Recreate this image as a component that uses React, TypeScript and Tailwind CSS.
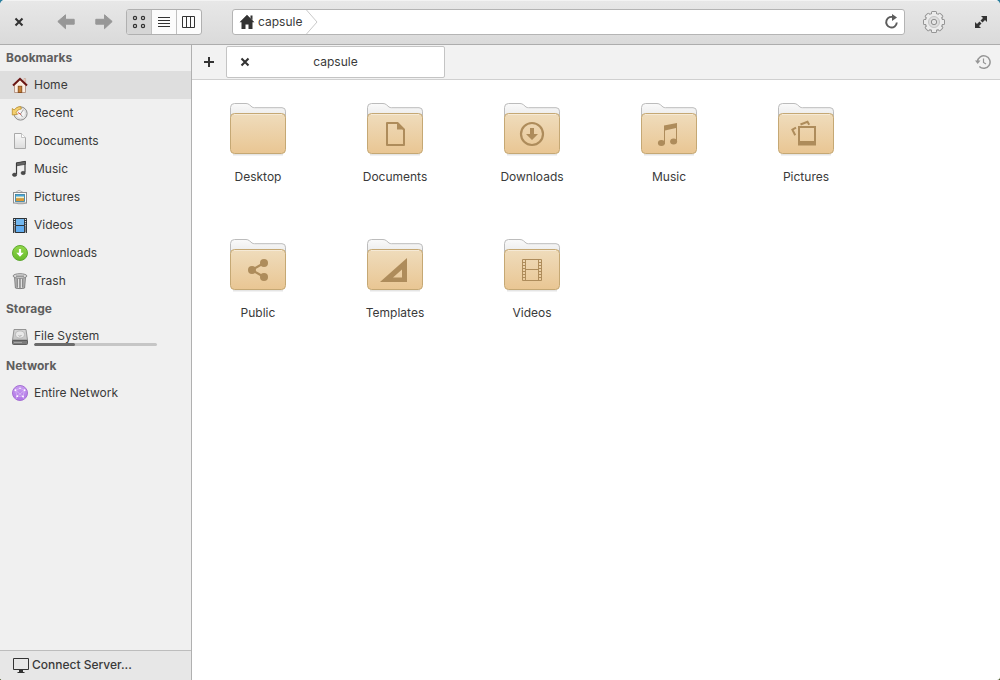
import React, { useState } from "react";

const INK = "#333333";
const GLYPH = "#ae8c5b";

function SidebarIcon({ children }: { children: React.ReactNode }) {
  return (
    <svg viewBox="0 0 16 16" className="size-4 shrink-0 overflow-visible" aria-hidden="true">
      {children}
    </svg>
  );
}

const icons: Record<string, React.ReactNode> = {
  home: (
    <>
      <path d="M12 1.5h1.6v5H12z" fill="#f6d9c8" stroke="#c2a090" strokeWidth=".6" />
      <path d="M2.5 8 8 2.8 13.5 8v7.5h-11z" fill="#fbeee2" stroke="#a98573" strokeWidth=".8" />
      <path d="M1 8.5 8 1.8l7 6.7" fill="none" stroke="#6b1715" strokeWidth="2" />
      <rect x="6.2" y="9.2" width="3.6" height="6.3" fill="#c67f35" stroke="#7d4514" strokeWidth=".8" />
    </>
  ),
  recent: (
    <>
      <circle cx="8.5" cy="8.5" r="6.6" fill="#e6e6e6" stroke="#8c8c8c" />
      <circle cx="8.5" cy="8.5" r="4.9" fill="#f4f4f4" stroke="#cccccc" strokeWidth=".6" />
      <path d="M8.500 9l2.800-4.200M8.500 9l2 3" stroke="#8a8a8a" strokeWidth=".8" fill="none" />
      <path d="M9 9.5 6 7.5" stroke="#d9534a" strokeWidth="1" />
      <path d="M.3 3.5V10l5.300-.7-1.500-1.600C5 5.500 6.800 4.300 9.300 4L8.800 1.600C5.800 1.600 3.800 2.800 2.200 5z" fill="#f4d070" stroke="#b98d2d" strokeWidth=".8" />
    </>
  ),
  document: (
    <>
      <path d="M2.5.5h7l4 4v11h-11z" fill="url(#paper)" stroke="#a9a9a9" />
      <path d="M9.5.5v4h4" fill="#ffffff" stroke="#bcbcbc" strokeWidth=".9" />
    </>
  ),
  music: (
    <>
      <path d="M4.5 13V2.2L13 .8V11" fill="none" stroke="#3c3c3c" strokeWidth="1.2" />
      <path d="M4.5 1.8 13.4.3v3L4.5 4.8z" fill="#666666" stroke="#333333" strokeWidth=".7" />
      <ellipse cx="2.6" cy="13.8" rx="2.2" ry="1.7" fill="#4b4b4b" stroke="#2f2f2f" strokeWidth=".5" />
      <ellipse cx="11.2" cy="12" rx="2.2" ry="1.7" fill="#4b4b4b" stroke="#2f2f2f" strokeWidth=".5" />
    </>
  ),
  pictures: (
    <>
      <path d="m1 5 6-3.8 8 4.3" fill="#eeeeee" stroke="#a6a6a6" strokeWidth=".8" />
      <path d="M1.5 13 6 14.8h5l3.6-1" fill="none" stroke="#aaaaaa" strokeWidth=".8" />
      <rect x="1.5" y="3.5" width="13" height="10.5" fill="#fbfbfb" stroke="#8f8f8f" />
      <rect x="3.5" y="5.5" width="9" height="7" fill="#45a5dc" stroke="#3b7f9b" strokeWidth=".8" />
      <path d="M4 7.500h8v2H4z" fill="#f6f0c9" />
      <path d="M4 9.200h8v2.900H4z" fill="#dd9a33" />
    </>
  ),
  videos: (
    <>
      <rect x="1" y="1" width="14" height="15" rx=".5" fill="#2d3338" />
      <rect x="4" y="2" width="8" height="6" fill="#72b7ef" />
      <rect x="4" y="9" width="8" height="6" fill="#62adf0" />
      <path d="M2.5 2v14M13.5 2v14" stroke="#e6e6e6" strokeWidth="1.2" strokeDasharray="1.1 1" />
    </>
  ),
  downloads: (
    <>
      <circle cx="8" cy="8" r="7.5" fill="url(#green)" stroke="#5fa832" />
      <path d="M6.9 4h2.2v3.8h2.6L8 11.8 4.3 7.8h2.6z" fill="#ffffff" />
    </>
  ),
  trash: (
    <>
      <path d="m2.5 3.5.9 11.5c1.2.8 8 .8 9.2 0l.9-11.5z" fill="#bdbdbd" stroke="#777777" strokeWidth=".9" />
      <path d="M5.2 5.5v9M8 5.5V15M10.8 5.5v9" stroke="#777777" strokeWidth="1" />
      <path d="M6.5 5.5V15M9.4 5.5V15" stroke="#e9e9e9" strokeWidth=".9" />
      <ellipse cx="8" cy="3" rx="6.9" ry="2.3" fill="#d9d9d9" stroke="#7d7d7d" strokeWidth=".9" />
      <path d="M4 3.2h8" stroke="#8e8e8e" strokeWidth="1.3" />
    </>
  ),
  drive: (
    <>
      <path d="M2 .5h12l1.5 10.5H.5z" fill="url(#metal)" stroke="#8b8b8b" strokeWidth=".9" />
      <ellipse cx="8" cy="5.5" rx="4.5" ry="3.6" fill="#e8e8e8" stroke="#b2b2b2" strokeWidth=".8" />
      <path d="M6.5 6.5c.5 1 2.4 1 3-.4" fill="none" stroke="#999999" strokeWidth=".8" />
      <path d="M.5 11.5h15v3q0 1-1 1h-13q-1 0-1-1z" fill="#7c7c7c" stroke="#555555" strokeWidth=".9" />
      <path d="M2 13.500h8" stroke="#a5a5a5" />
    </>
  ),
  network: (
    <>
      <circle cx="8" cy="8" r="7.5" fill="url(#purple)" stroke="#a56fd4" />
      <path d="M3.4 5.2 8 3.4l4.6 1.8M3.4 5.2l1.8 6 5.8.2 1.6-6.2M3.4 5.2l7.6 6.2M12.6 5.2l-7.4 6M8 3.4v-2M5.2 11.2 4 14M11 11.4l1 2.4" fill="none" stroke="#dfc4f7" strokeWidth=".6" />
      <g fill="#ffffff">
        <circle cx="3.4" cy="5.2" r=".9" />
        <circle cx="12.6" cy="5.2" r=".9" />
        <circle cx="8" cy="3.4" r=".7" />
        <circle cx="5.2" cy="11.2" r=".9" />
        <circle cx="11" cy="11.4" r=".9" />
      </g>
    </>
  ),
};

const bookmarks = [
  { name: "Home", icon: "home" },
  { name: "Recent", icon: "recent" },
  { name: "Documents", icon: "document" },
  { name: "Music", icon: "music" },
  { name: "Pictures", icon: "pictures" },
  { name: "Videos", icon: "videos" },
  { name: "Downloads", icon: "downloads" },
  { name: "Trash", icon: "trash" },
];

const folders: { name: string; glyph: React.ReactNode }[] = [
  { name: "Desktop", glyph: null },
  {
    name: "Documents",
    glyph: (
      <>
        <path d="M24 25h10.5l6.5 6.5V47H24z" fill="none" stroke={GLYPH} strokeWidth="2" strokeLinejoin="round" />
        <path d="M34 24.5V31.5h7.5z" fill={GLYPH} />
      </>
    ),
  },
  {
    name: "Downloads",
    glyph: (
      <>
        <circle cx="32" cy="36" r="11" fill="none" stroke={GLYPH} strokeWidth="2.2" />
        <path d="M30 30h4v6h4l-6 6-6-6h4z" fill={GLYPH} />
      </>
    ),
  },
  {
    name: "Music",
    glyph: (
      <g fill={GLYPH}>
        <path d="m27 27.5 13-2.6V43h-1V30l-11 2.4V46h-1z" />
        <ellipse cx="24.4" cy="45" rx="3.5" ry="2.9" />
        <ellipse cx="36.6" cy="43.5" rx="3.5" ry="2.9" />
      </g>
    ),
  },
  {
    name: "Pictures",
    glyph: (
      <>
        <path d="M25 42.5V29h16v15H25z" fill="none" stroke={GLYPH} strokeWidth="2" />
        <path d="M24 43.500h18V47.500H24z" fill={GLYPH} />
        <path d="m26.500 26.500 7-2.800 1.700 3M22 29.700l-3.600 2 2.800 5.600" fill="none" stroke={GLYPH} strokeWidth="2" />
      </>
    ),
  },
  {
    name: "Public",
    glyph: (
      <>
        <path d="m38 29-12 7 12 7" fill="none" stroke={GLYPH} strokeWidth="2.2" />
        <g fill={GLYPH}>
          <circle cx="38" cy="29" r="4" />
          <circle cx="26" cy="36" r="4" />
          <circle cx="38" cy="43" r="4" />
        </g>
      </>
    ),
  },
  {
    name: "Templates",
    glyph: <path fillRule="evenodd" d="M44 24v24H17zM39 35.5 30 43.5h9z" fill={GLYPH} />,
  },
  {
    name: "Videos",
    glyph: (
      <>
        <path d="M22.5 25.5h19v21h-19zM25.5 25.5v21M38.5 25.5v21M25.5 35.5h13" fill="none" stroke={GLYPH} />
        <path d="M24 28v18M40 28v18" stroke={GLYPH} strokeWidth="3" strokeDasharray="1 2" />
      </>
    ),
  },
];

function FolderIcon({ children }: { children: React.ReactNode }) {
  return (
    <svg viewBox="0 0 64 64" className="size-16" aria-hidden="true">
      <path d="M7 56.5h50" stroke="#000000" strokeOpacity=".1" strokeWidth="2" />
      <path d="M4.5 26V9.5q0-4 4-4h11.5q2 0 3.5 1.3L26 9q1 .7 2.5.7H56q3.5 0 3.5 3.5V26z" fill="url(#folderBack)" stroke="#bcbcbc" />
      <rect x="4.5" y="15.5" width="55" height="40" rx="4" fill="url(#folderFront)" stroke="#c5a874" />
      <path d="M8 16.5h48" stroke="#ffffff" strokeOpacity=".4" />
      {children}
    </svg>
  );
}

function Cross() {
  return (
    <svg viewBox="0 0 10 10" className="size-[10px]" aria-hidden="true">
      <path d="m1.5 1.5 7 7m0-7-7 7" stroke={INK} strokeWidth="2.1" />
    </svg>
  );
}

function Row({ name, icon, selected, onClick }: { name: string; icon: string; selected?: boolean; onClick?: () => void }) {
  return (
    <button
      type="button"
      onClick={onClick}
      className={`flex h-7 w-full items-center gap-1.5 pl-3 text-left ${selected ? "bg-[#dedede]" : ""}`}
    >
      <SidebarIcon>{icons[icon]}</SidebarIcon>
      {name}
    </button>
  );
}

function Heading({ children }: { children: React.ReactNode }) {
  return <h2 className="h-[27px] pl-1.5 leading-[27px] font-bold text-[#5e5e5e]">{children}</h2>;
}

const views = [
  {
    name: "Icon view",
    art: (
      <g fill="none" stroke={INK} strokeWidth="1.2">
        <circle cx="4" cy="4" r="1.6" />
        <circle cx="12" cy="4" r="1.6" />
        <circle cx="4" cy="12" r="1.6" />
        <circle cx="12" cy="12" r="1.6" />
      </g>
    ),
  },
  { name: "List view", art: <path d="M2 3.5h12M2 6.5h12M2 9.5h12M2 12.5h12" stroke={INK} /> },
  {
    name: "Column view",
    art: <path d="M1.5 2.5h12v11h-12zM5.5 2.5v11M9.5 2.5v11" fill="none" stroke={INK} />,
  },
];

const gearTeeth = [0, 45, 90, 135, 180, 225, 270, 315];

export default function App() {
  const [place, setPlace] = useState("Home");
  const [view, setView] = useState("Icon view");

  return (
    <div className="min-h-screen bg-linear-to-b from-[#2b7f9e] to-[#3f4d1c]">
      <svg className="absolute size-0" aria-hidden="true">
        <defs>
          <linearGradient id="folderBack" x1="0" y1="0" x2="0" y2="1">
            <stop offset="0" stopColor="#fafafa" />
            <stop offset="1" stopColor="#e2e2e2" />
          </linearGradient>
          <linearGradient id="folderFront" x1="0" y1="0" x2="0" y2="1">
            <stop offset="0" stopColor="#efdcbc" />
            <stop offset="1" stopColor="#e9c693" />
          </linearGradient>
          <linearGradient id="paper" x1="0" y1="0" x2="0" y2="1">
            <stop offset="0" stopColor="#fafafa" />
            <stop offset="1" stopColor="#dcdcdc" />
          </linearGradient>
          <linearGradient id="green" x1="0" y1="0" x2="0" y2="1">
            <stop offset="0" stopColor="#93d84b" />
            <stop offset="1" stopColor="#66bb2a" />
          </linearGradient>
          <linearGradient id="metal" x1="0" y1="0" x2="0" y2="1">
            <stop offset="0" stopColor="#d6d6d6" />
            <stop offset="1" stopColor="#c4c4c4" />
          </linearGradient>
          <linearGradient id="purple" x1="0" y1="0" x2="0" y2="1">
            <stop offset="0" stopColor="#c79cf0" />
            <stop offset="1" stopColor="#b074e6" />
          </linearGradient>
        </defs>
      </svg>

      <div className="flex min-h-screen flex-col overflow-hidden rounded-t-[5px] rounded-b-[3px] bg-white font-['Inter','Liberation_Sans',sans-serif] text-[12px] leading-4 text-[#3a3a3a]">
        <header className="flex h-[45px] items-center border-b border-[#adadad] bg-linear-to-b from-[#e8e8e8] to-[#dadada] shadow-[inset_0_1px_0_#f3f3f3]">
          <button type="button" aria-label="Close window" className="flex h-8 w-[38px] items-center justify-center">
            <Cross />
          </button>
          <div className="ml-[9px] flex">
            <button type="button" aria-label="Back" className="flex h-8 w-[38px] items-center justify-center">
              <svg viewBox="0 0 18 16" className="h-4 w-[18px]" aria-hidden="true">
                <path d="M.8 7.5 8.5.8v4.500h8.700v4.900H8.500v4.500z" fill="#979797" stroke="#979797" strokeLinejoin="round" />
              </svg>
            </button>
            <button type="button" aria-label="Forward" className="flex h-8 w-[38px] items-center justify-center">
              <svg viewBox="0 0 18 16" className="h-4 w-[18px]" aria-hidden="true">
                <path d="M17.2 7.5 9.5.8v4.500H.8v4.900h8.700v4.500z" fill="#979797" stroke="#979797" strokeLinejoin="round" />
              </svg>
            </button>
          </div>
          <div className="ml-[3px] flex h-[26px] overflow-hidden rounded-[3px] border border-[#b0b0b0] bg-[#fcfcfc]">
            {views.map((v) => (
              <button
                key={v.name}
                type="button"
                aria-label={v.name}
                aria-pressed={view === v.name}
                onClick={() => setView(v.name)}
                className={`flex w-[25px] items-center justify-center border-r border-[#c0c0c0] last:w-6 last:border-r-0 ${view === v.name ? "bg-[#d6d6d6]" : ""}`}
              >
                <svg viewBox="0 0 16 16" className="size-4 shrink-0" aria-hidden="true">
                  {v.art}
                </svg>
              </button>
            ))}
          </div>
          <nav aria-label="Location" className="ml-[30px] flex h-[26px] min-w-0 flex-1 items-center rounded-[3px] border border-[#b4b4b4] bg-white">
            <button type="button" className="flex h-6 items-center gap-[3px] pl-1.5">
              <svg viewBox="0 0 16 16" className="size-4" aria-hidden="true">
                <path d="M8 .8 15.5 8.3H13.5V15h-4v-4.500h-3V15h-4V8.300H.5zM11.500 1.500h2V6l-2-2z" fill={INK} />
              </svg>
              capsule
            </button>
            <svg viewBox="0 0 12 24" className="ml-1 h-6 w-3" aria-hidden="true">
              <path d="M.5 0 11 12 .5 24" fill="none" stroke="#c9c9c9" />
            </svg>
            <button type="button" aria-label="Reload" className="ml-auto flex h-6 w-[26px] items-center justify-center">
              <svg viewBox="0 0 16 16" className="size-4" aria-hidden="true">
                <path d="M11 3.500A5.300 5.300 0 1 0 13.800 8.500" fill="none" stroke="#5c5c5c" strokeWidth="1.900" />
                <path d="M9 0 14 3.500 9 7z" fill="#5c5c5c" />
              </svg>
            </button>
          </nav>
          <button type="button" aria-label="Settings" className="ml-2.5 flex h-8 w-[38px] items-center justify-center">
            <svg viewBox="0 0 24 24" className="size-6" aria-hidden="true">
              <g fill="#e9e9e9" stroke="#959595" strokeWidth="2">
                {gearTeeth.map((a) => (
                  <rect key={a} x="10" y="2" width="4" height="4" rx=".5" transform={`rotate(${a} 12 12)`} />
                ))}
                <circle cx="12" cy="12" r="8.3" />
              </g>
              <g fill="#ebebeb">
                {gearTeeth.map((a) => (
                  <rect key={a} x="10" y="2" width="4" height="5" transform={`rotate(${a} 12 12)`} />
                ))}
                <circle cx="12" cy="12" r="8.3" />
              </g>
              <circle cx="12" cy="12" r="5.5" fill="#dddddd" stroke="#c4c4c4" />
              <circle cx="12" cy="12" r="2.7" fill="#e4e4e4" stroke="#8f8f8f" />
            </svg>
          </button>
          <button type="button" aria-label="Maximize window" className="ml-[9px] flex h-8 w-[38px] items-center justify-center">
            <svg viewBox="0 0 12 12" className="size-3" aria-hidden="true">
              <path d="M6 0h6v6l-2-2-2.500 2.500-2-2L8 2zM0 6l2 2 2.500-2.500 2 2L4 10l2 2H0z" fill={INK} />
            </svg>
          </button>
        </header>

        <div className="flex flex-1">
          <aside className="flex w-48 shrink-0 flex-col border-r border-[#b0b0b0] bg-[#f0f0f0]">
            <div className="-mt-px">
              <Heading>Bookmarks</Heading>
              {bookmarks.map((b) => (
                <Row key={b.name} {...b} selected={place === b.name} onClick={() => setPlace(b.name)} />
              ))}
            </div>
            <Heading>Storage</Heading>
            <button type="button" className="flex h-[30px] w-full items-center gap-1.5 pl-3 text-left">
              <SidebarIcon>{icons.drive}</SidebarIcon>
              <span className="mr-[34px] flex-1">
                <span className="block leading-[15px]">File System</span>
                <span className="block h-[3px] overflow-hidden rounded-full bg-[#c6c6c6]">
                  <span className="block h-full w-1/3 rounded-full bg-[#6b6b6b]" />
                </span>
              </span>
            </button>
            <Heading>Network</Heading>
            <Row name="Entire Network" icon="network" />
            <button type="button" className="mt-auto flex h-[30px] w-full items-center gap-[3px] border-t border-[#bdbdbd] bg-[#e7e7e7] pb-0.5 pl-3 text-left font-medium">
              <svg viewBox="0 0 17 16" className="h-4 w-[17px]" aria-hidden="true">
                <path d="M1.5 1.5h15v11h-15z" fill="none" stroke={INK} />
                <path d="M7 13h4v2h1.5v1h-7v-1H7z" fill={INK} />
              </svg>
              Connect Server...
            </button>
          </aside>

          <main className="flex min-w-0 flex-1 flex-col">
            <div className="flex h-[35px] items-center border-b border-[#d0d0d0] bg-[#f2f2f2]">
              <button type="button" aria-label="New tab" className="flex h-8 w-[34px] items-center justify-center">
                <svg viewBox="0 0 10 10" className="size-[10px]" aria-hidden="true">
                  <path d="M5 0v10M0 5h10" stroke={INK} strokeWidth="2" />
                </svg>
              </button>
              <div className="flex h-8 w-[219px] items-center rounded-[2px] border border-[#c4c4c4] bg-white">
                <button type="button" aria-label="Close tab" className="flex h-7 w-9 items-center justify-center">
                  <Cross />
                </button>
                <button type="button" className="mr-9 h-7 flex-1 text-center">
                  capsule
                </button>
              </div>
              <button type="button" aria-label="Recently closed tabs" className="ml-auto flex h-8 w-[34px] items-center justify-center">
                <svg viewBox="0 0 16 16" className="size-4" aria-hidden="true">
                  <path d="M2.5 7.5A6.3 6.3 0 1 1 4.3 12.5" fill="none" stroke="#969696" strokeWidth="1.5" />
                  <path d="M0 6.5h5.5L2.7 10z" fill="#969696" />
                  <path d="M8.5 4.5V8.5L11 10" fill="none" stroke="#969696" strokeWidth="1.2" />
                </svg>
              </button>
            </div>
            <div className="grid grid-cols-[repeat(auto-fill,112px)] gap-x-[25px] gap-y-12 py-[18px] pr-5 pl-2.5">
              {folders.map((f) => (
                <button key={f.name} type="button" className="flex h-[88px] flex-col items-center justify-start gap-[7px]">
                  <FolderIcon>{f.glyph}</FolderIcon>
                  <span>{f.name}</span>
                </button>
              ))}
            </div>
          </main>
        </div>
      </div>
    </div>
  );
}
